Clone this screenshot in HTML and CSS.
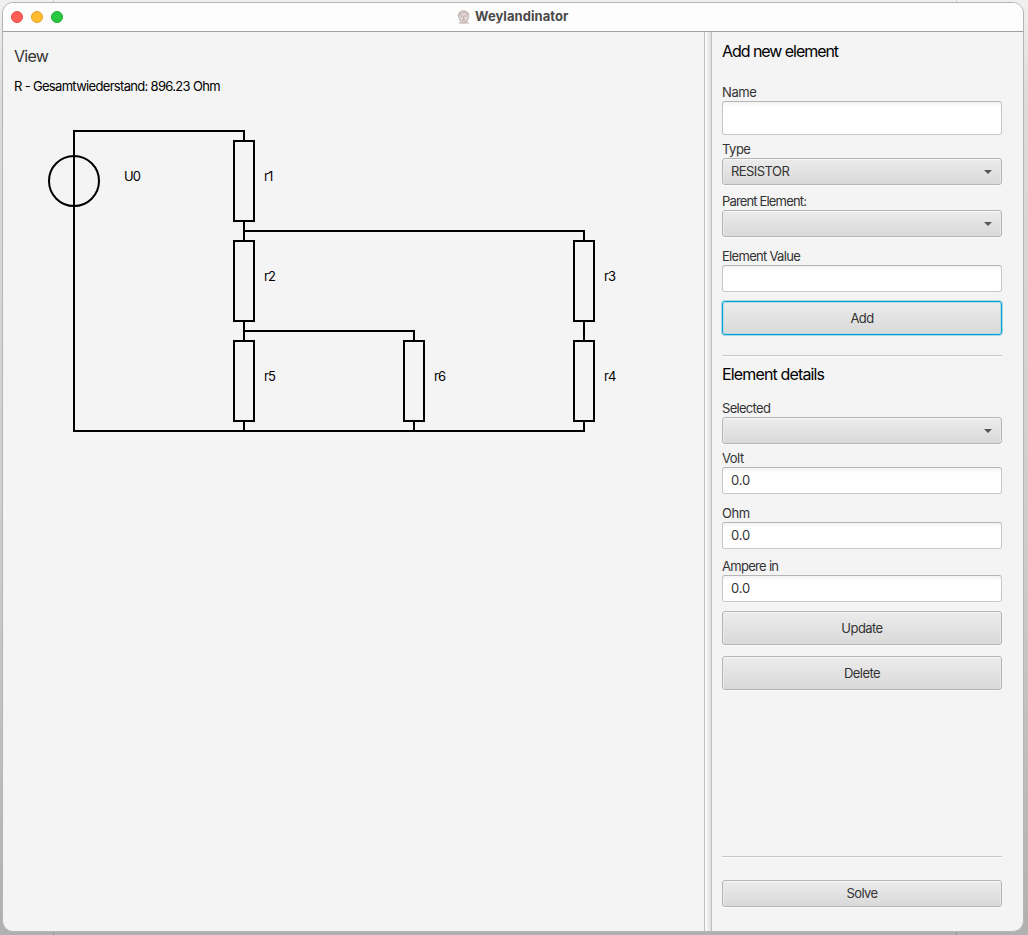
FILE: index.html
```html
<!DOCTYPE html>
<html lang="en">
<head>
<meta charset="utf-8">
<title>Weylandinator</title>
<link rel="stylesheet" href="styles.css">
</head>
<body>
<div class="window">
  <header class="titlebar">
    <div class="lights"><span class="light red"></span><span class="light yellow"></span><span class="light green"></span></div>
    <div class="caption">
      <svg class="face" width="14" height="14" viewBox="0 0 14 14">
        <path d="M3 11.500 1.500 13.700h10.500l-1.200-2.200z" fill="#cfc3c3"/>
        <path d="M1.500 5C1.500 2 4 .8 6.500 .8S11.800 2 11.800 5.300c0 3-1.200 7-5.200 7.200C3 12.500 1.500 8 1.500 5z" fill="#e4d6d5" stroke="#bcb0b0" stroke-width="1"/>
        <path d="M2.200 5C3 2.800 5 2.400 7 2.400s3.700.7 4.200 2.500" fill="none" stroke="#c4b7b6" stroke-width="1.300"/>
        <path d="M3.300 6h2.400M7.500 6h2.400M5 10h3.400M6.700 6.500v2" fill="none" stroke="#ab9b9e" stroke-width=".9"/>
      </svg>
      <span class="caption-text">Weylandinator</span>
    </div>
  </header>
  <div class="split">
    <main class="view">
      <h1 class="view-title">View</h1>
      <p class="total">R - Gesamtwiederstand: 896.23 Ohm</p>
      <svg class="circuit" width="640" height="340" viewBox="0 100 640 340">
        <g class="wires">
          <path d="M244 141V131H74V431H584V421"/>
          <path d="M244 221V241M244 231H584V241M244 321V341M244 331H414V341M584 321V341M244 421V431M414 421V431"/>
          <circle cx="74" cy="181" r="25"/>
          <rect x="234" y="141" width="20" height="80"/>
          <rect x="234" y="241" width="20" height="80"/>
          <rect x="574" y="241" width="20" height="80"/>
          <rect x="234" y="341" width="20" height="80"/>
          <rect x="404" y="341" width="20" height="80"/>
          <rect x="574" y="341" width="20" height="80"/>
        </g>
        <g class="names">
          <text x="124" y="181">U0</text>
          <text x="264" y="181">r1</text>
          <text x="264" y="281">r2</text>
          <text x="604" y="281">r3</text>
          <text x="604" y="381">r4</text>
          <text x="264" y="381">r5</text>
          <text x="434" y="381">r6</text>
        </g>
      </svg>
    </main>
    <div class="divider"></div>
    <aside class="panel">
      <h2 class="heading">Add new element</h2>
      <label class="label name-label">Name</label>
      <div class="field tall"></div>
      <label class="label type-label">Type</label>
      <div class="combo"><span class="resistor">RESISTOR</span><i class="arrow"></i></div>
      <label class="label parent-label">Parent Element:</label>
      <div class="combo"><i class="arrow"></i></div>
      <label class="label value-label">Element Value</label>
      <div class="field"></div>
      <button class="button add">Add</button>
      <hr class="rule">
      <h2 class="heading details">Element details</h2>
      <label class="label selected-label">Selected</label>
      <div class="combo"><i class="arrow"></i></div>
      <label class="label volt-label">Volt</label>
      <div class="field">0.0</div>
      <label class="label ohm-label">Ohm</label>
      <div class="field">0.0</div>
      <label class="label ampere-label">Ampere in</label>
      <div class="field">0.0</div>
      <button class="button update">Update</button>
      <button class="button delete">Delete</button>
      <hr class="rule bottom">
      <button class="button solve">Solve</button>
    </aside>
  </div>
</div>
</body>
</html>
```
FILE: styles.css
```css
* { box-sizing: border-box; }
body {
  margin: 0;
  height: 935px;
  overflow: hidden;
  padding: 2px 4px 3px 2px;
  background:
    linear-gradient(90deg, transparent 53px, #00000026 53px 54px, transparent 54px 956px, #00000026 956px 957px, transparent 957px),
    linear-gradient(#f0f0f0, #dcdcdc 10%, #cccccc 60%, #b0b0b0);
  font-family: Inter, "Liberation Sans", sans-serif;
  font-size: 13px;
  color: #333;
}
.window {
  height: 930px;
  width: 1022px;
  display: flex;
  flex-direction: column;
  border: 1px solid #b4b4b4;
  border-radius: 11px;
  background: #f4f4f4;
  overflow: hidden;
}
.titlebar {
  height: 29px;
  flex: none;
  display: flex;
  align-items: center;
  background: #fdfdfd;
  border-bottom: 1px solid #a0a0a0;
}
.lights { display: flex; gap: 8px; width: 454px; padding-left: 8px; }
.light { width: 12px; height: 12px; border-radius: 50%; border: 1px solid; }
.red { background: #ff5f57; border-color: #e2463f; }
.yellow { background: #febc2e; border-color: #dfa023; }
.green { background: #28c840; border-color: #1aab29; }
.caption { display: flex; align-items: center; gap: 4px; }
.caption-text { padding-bottom: 2px; font-weight: 700; color: #4a4a4a; letter-spacing: 0.05px; white-space: nowrap; }
.split { flex: 1; display: flex; min-height: 0; }
.view { width: 701px; padding: 13px 0 0 11px; color: #000; }
.view-title { margin: 0; font-size: 16px; font-weight: 400; line-height: 22px; color: #333; letter-spacing: -0.7px; }
.total { margin: 9px 0 0; line-height: 20px; letter-spacing: -0.68px; }
.circuit { display: block; margin: 4px 0 0 -14px; }
.wires { fill: none; stroke: #000; stroke-width: 2; }
.names { fill: #000; font-size: 13px; letter-spacing: -0.8px; }
.divider {
  width: 8px;
  border: solid #bfbfbf;
  border-width: 0 1px;
  background: linear-gradient(90deg, #fcfcfc, #dedede);
}
.panel { width: 311px; padding: 8px 0 24px 10px; display: flex; flex-direction: column; align-items: flex-start; }
.heading { margin: 0; height: 22px; line-height: 22px; font-size: 16px; font-weight: 400; color: #000; letter-spacing: -1.05px; }
.label { height: 18px; line-height: 18px; letter-spacing: -0.7px; }
.name-label { margin-top: 21px; letter-spacing: -0.4px; }
.type-label, .volt-label { margin-top: 5px; letter-spacing: -0.5px; }
.parent-label { margin-top: 7px; letter-spacing: -0.84px; }
.value-label, .ohm-label { margin-top: 10px; }
.ohm-label { letter-spacing: -0.4px; }
.selected-label { margin-top: 14px; }
.ampere-label { margin-top: 8px; }
.resistor { padding-bottom: 1px; letter-spacing: -0.55px; }
.field, .combo, .button {
  width: 280px;
  height: 27px;
  flex: none;
  border: 1px solid #b5b5b5;
  border-radius: 3px;
  font: inherit;
  color: #333;
}
.field {
  padding: 0 8px;
  line-height: 25px;
  letter-spacing: -0.2px;
  border-color: #b5b5b5 #c5c5c5 #cacaca;
  background: linear-gradient(#f3f3f3, #fff 5px);
}
.tall { height: 34px; }
.combo, .button {
  background: linear-gradient(#ececec, #d9d9d9);
  box-shadow: inset 0 1px #f8f8f8, inset 1px 0 #e9e9e9, inset -1px 0 #e9e9e9, 0 1px #fafafa;
}
.combo { display: flex; align-items: center; padding: 0 9px 0 8px; }
.arrow { margin-left: auto; border: solid transparent; border-width: 4px 4px 0; border-top-color: #555; }
.button { height: 34px; padding: 0; text-align: center; letter-spacing: -0.55px; }
.add { margin-top: 9px; border-color: #039ed3; box-shadow: 0 0 0 1px #a9d8e9, inset 0 0 0 1px #b9dce7; }
.update { margin-top: 9px; }
.delete { margin-top: 11px; }
.rule { width: 280px; height: 2px; flex: none; margin: 20px 0 0; border: 0; border-top: 1px solid #c8c8c8; background: #fbfbfb; }
.details { margin-top: 6px; letter-spacing: -0.85px; }
.bottom { margin-top: auto; }
.solve { height: 27px; margin-top: 22px; padding-bottom: 2px; }
```
